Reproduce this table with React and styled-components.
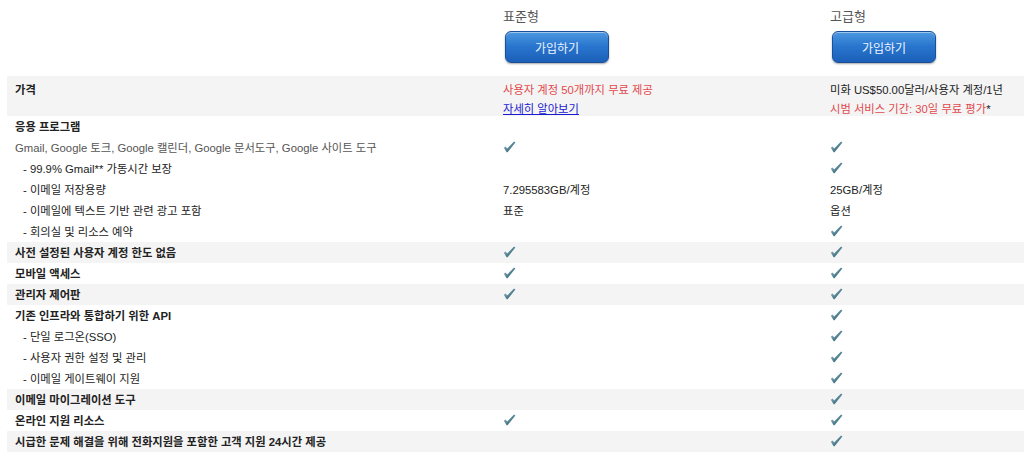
import React from "react";
import styled, { createGlobalStyle } from "styled-components";

const Global = createGlobalStyle`
  html, body { margin: 0; padding: 0; background: #fff; }
  body {
    font-family: "Liberation Sans", Arial, "Noto Sans CJK KR", sans-serif;
    font-size: 11.3px;
    color: #222;
  }
`;

const Page = styled.div`
  padding: 0 0 0 7px;
`;

const Row = styled.div`
  display: grid;
  grid-template-columns: 488px 327px 1fr;
  background: ${(p) => (p.$shade ? "#f4f4f4" : "#fff")};
  height: 21px;
  align-items: start;
`;

const HeadRow = styled(Row)`
  height: 76px;
`;

const PriceRow = styled(Row)`
  height: 40px;
`;

const Cell = styled.div`
  padding: 2px 8px 0;
  line-height: 19px;
  white-space: nowrap;
  font-weight: ${(p) => (p.$bold ? "bold" : "normal")};
  color: ${(p) => (p.$muted ? "#555" : "#222")};
  padding-left: ${(p) => (p.$indent ? "16px" : "8px")};
`;

const PriceCell = styled.div`
  padding: 5px 8px 0;
  line-height: 19px;
  white-space: nowrap;
  font-weight: ${(p) => (p.$bold ? "bold" : "normal")};
`;

const PlanHead = styled.div`
  padding: 9px 8px 0 8px;
`;

const PlanName = styled.div`
  font-size: 13px;
  color: #555;
  line-height: 15px;
  margin-bottom: 7px;
`;

const JoinButton = styled.button`
  width: 104px;
  height: 32px;
  margin-left: 2px;
  border-radius: 6px;
  border: 1px solid #1a4f9a;
  background: linear-gradient(to bottom, #4d98e0 0%, #2a77cf 45%, #1b5fb8 100%);
  box-shadow: inset 0 1px 0 rgba(255,255,255,0.45), 0 1px 2px rgba(0,0,0,0.35);
  color: #eef4ff;
  font-family: "Liberation Sans", Arial, "Noto Sans CJK KR", sans-serif;
  font-size: 12px;
  cursor: pointer;
  padding: 0;
`;

const Red = styled.div`
  color: #e2484d;
`;

const Link = styled.a`
  color: #1a1ad0;
  text-decoration: underline;
`;

const CheckWrap = styled.span`
  display: inline-flex;
  vertical-align: middle;
  margin-top: -4px;
`;

const Check = () => (
  <CheckWrap>
    <svg width="13" height="12" viewBox="0 0 13 12">
      <defs>
        <linearGradient id="ckg" x1="0" y1="0" x2="1" y2="1">
          <stop offset="0" stopColor="#a8cad5" />
          <stop offset="0.55" stopColor="#4f7f90" />
          <stop offset="1" stopColor="#2e5466" />
        </linearGradient>
      </defs>
      <path
        d="M0.8 6.8 L2.6 5.6 L4.2 7.6 L11 0.6 L12.4 1.6 L4.6 11.2 L3.6 11.2 Z"
        fill="url(#ckg)"
      />
    </svg>
  </CheckWrap>
);

const rows = [
  { label: "응용 프로그램", bold: true },
  { label: "Gmail, Google 토크, Google 캘린더, Google 문서도구, Google 사이트 도구", muted: true, a: true, b: true },
  { label: "- 99.9% Gmail** 가동시간 보장", indent: true, b: true },
  { label: "- 이메일 저장용량", indent: true, a: "7.295583GB/계정", b: "25GB/계정" },
  { label: "- 이메일에 텍스트 기반 관련 광고 포함", indent: true, a: "표준", b: "옵션" },
  { label: "- 회의실 및 리소스 예약", indent: true, b: true },
  { label: "사전 설정된 사용자 계정 한도 없음", bold: true, shade: true, a: true, b: true },
  { label: "모바일 액세스", bold: true, a: true, b: true },
  { label: "관리자 제어판", bold: true, shade: true, a: true, b: true },
  { label: "기존 인프라와 통합하기 위한 API", bold: true, b: true },
  { label: "- 단일 로그온(SSO)", indent: true, b: true },
  { label: "- 사용자 권한 설정 및 관리", indent: true, b: true },
  { label: "- 이메일 게이트웨이 지원", indent: true, b: true },
  { label: "이메일 마이그레이션 도구", bold: true, shade: true, b: true },
  { label: "온라인 지원 리소스", bold: true, a: true, b: true },
  { label: "시급한 문제 해결을 위해 전화지원을 포함한 고객 지원 24시간 제공", bold: true, shade: true, b: true },
];

const Value = ({ v }) => (v === true ? <Check /> : v ? v : null);

export default function App() {
  return (
    <>
      <Global />
      <Page>
        <HeadRow>
          <div />
          <PlanHead>
            <PlanName>표준형</PlanName>
            <JoinButton>가입하기</JoinButton>
          </PlanHead>
          <PlanHead>
            <PlanName>고급형</PlanName>
            <JoinButton>가입하기</JoinButton>
          </PlanHead>
        </HeadRow>
        <PriceRow $shade>
          <PriceCell $bold>가격</PriceCell>
          <PriceCell>
            <Red>사용자 계정 50개까지 무료 제공</Red>
            <Link href="#">자세히 알아보기</Link>
          </PriceCell>
          <PriceCell>
            <div>미화 US$50.00달러/사용자 계정/1년</div>
            <Red>
              시범 서비스 기간: 30일 무료 평가<span style={{ color: "#222" }}>*</span>
            </Red>
          </PriceCell>
        </PriceRow>
        {rows.map((r, i) => (
          <Row key={i} $shade={r.shade}>
            <Cell $bold={r.bold} $muted={r.muted} $indent={r.indent}>
              {r.label}
            </Cell>
            <Cell>
              <Value v={r.a} />
            </Cell>
            <Cell>
              <Value v={r.b} />
            </Cell>
          </Row>
        ))}
      </Page>
    </>
  );
}
